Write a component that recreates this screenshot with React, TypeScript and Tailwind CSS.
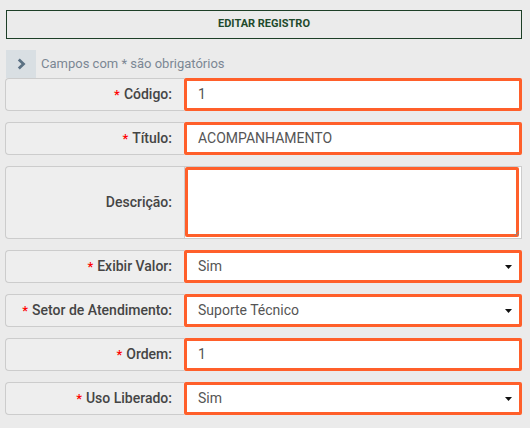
import React from 'react';

type TField = {
  label: string;
  required: boolean;
  kind: 'input' | 'select' | 'textarea';
  value?: string;
}

const fields: TField[] = [
  { label: 'Código:', required: true, kind: 'input', value: '1' },
  { label: 'Título:', required: true, kind: 'input', value: 'ACOMPANHAMENTO' },
  { label: 'Descrição:', required: false, kind: 'textarea' },
  { label: 'Exibir Valor:', required: true, kind: 'select', value: 'Sim' },
  { label: 'Setor de Atendimento:', required: true, kind: 'select', value: 'Suporte Técnico' },
  { label: 'Ordem:', required: true, kind: 'input', value: '1' },
  { label: 'Uso Liberado:', required: true, kind: 'select', value: 'Sim' },
]

function Row({ field }: { field: TField }) {
  const tall = field.kind === 'textarea'
  return (
    <div className={'flex mb-[11px] ' + (tall ? 'h-[73px]' : 'h-[33px]')}>
      <div className="w-[179px] shrink-0 flex items-center justify-end pr-[12px] bg-[#eeeeee] border border-[#cccccc] border-r-0 rounded-l-[4px] text-[14px] font-medium text-[#454545]">
        {field.required && <span className="text-[#ff0000] mr-[4px] text-[13px]">*</span>}
        {field.label}
      </div>
      {field.kind === 'textarea' ? (
        <div className="flex-1 border border-[#cccccc] bg-white relative">
          <div className="absolute inset-0 right-[2px] bottom-[1px] border-[3px] border-[#ff5f2a] rounded-[2px]"></div>
          <svg className="absolute right-[1px] bottom-[1px]" width="8" height="8" viewBox="0 0 8 8">
            <path d="M7 2 L2 7 M7 5 L5 7" stroke="#888" strokeWidth="1" />
          </svg>
        </div>
      ) : (
        <div className="flex-1 flex items-center justify-between bg-white border-[3px] border-[#ff5f2a] rounded-[2px] pl-[11px] pr-[7px] text-[14px] text-[#555555]">
          <span>{field.value}</span>
          {field.kind === 'select' && (
            <svg width="7" height="4" viewBox="0 0 7 4">
              <path d="M0 0 H7 L3.5 4 Z" fill="#111" />
            </svg>
          )}
        </div>
      )}
    </div>
  )
}

export default function App() {
  return (
    <div className="w-[530px] h-[428px] bg-[#ebebeb] pl-[5px] pr-[8px] pt-[10px] overflow-hidden" style={{ fontFamily: 'Roboto, "Liberation Sans", sans-serif' }}>
      <div className="ml-[1px] h-[29px] border border-[#1d3f27] flex items-center justify-center text-[11px] font-bold text-[#1e4a2b]">
        EDITAR REGISTRO
      </div>
      <div className="mt-[11px] h-[28px] flex items-center">
        <div className="ml-[1px] w-[30px] h-[28px] bg-[#d9dfe3] flex items-center justify-center">
          <svg width="9" height="12" viewBox="0 0 9 12">
            <path d="M1.8 1.5 L6.5 6 L1.8 10.5" stroke="#5b7183" strokeWidth="2.8" fill="none" />
          </svg>
        </div>
        <span className="ml-[5px] text-[13px] text-[#7b8794]">Campos com * são obrigatórios</span>
      </div>
      {fields.map((f) => (
        <Row key={f.label} field={f} />
      ))}
    </div>
  );
}
